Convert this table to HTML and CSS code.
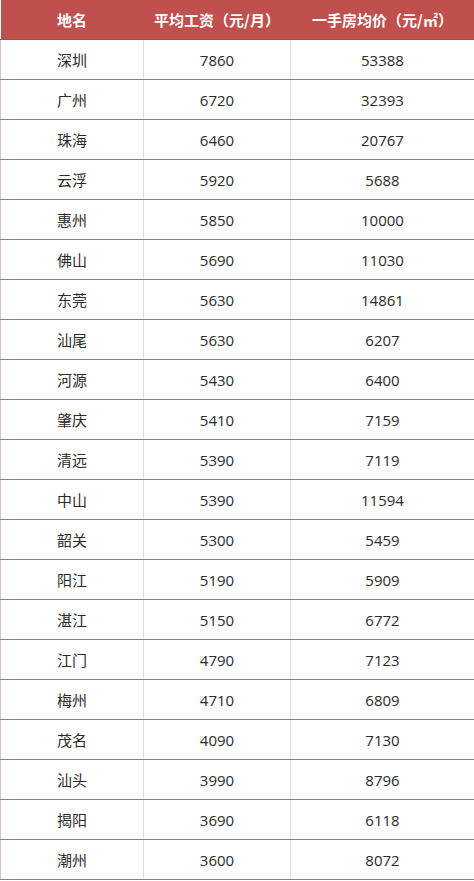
FILE: index.html
```html
<!DOCTYPE html>
<html lang="zh-CN">
<head>
<meta charset="utf-8">
<title>广东各市平均工资与房价</title>
<link rel="stylesheet" href="styles.css">
</head>
<body>
<table class="data">
<colgroup><col class="c1"><col class="c2"><col class="c3"></colgroup>
<thead>
<tr><th>地名</th><th>平均工资（元/月）</th><th>一手房均价（元/㎡）</th></tr>
</thead>
<tbody>
<tr><td>深圳</td><td>7860</td><td>53388</td></tr>
<tr><td>广州</td><td>6720</td><td>32393</td></tr>
<tr><td>珠海</td><td>6460</td><td>20767</td></tr>
<tr><td>云浮</td><td>5920</td><td>5688</td></tr>
<tr><td>惠州</td><td>5850</td><td>10000</td></tr>
<tr><td>佛山</td><td>5690</td><td>11030</td></tr>
<tr><td>东莞</td><td>5630</td><td>14861</td></tr>
<tr><td>汕尾</td><td>5630</td><td>6207</td></tr>
<tr><td>河源</td><td>5430</td><td>6400</td></tr>
<tr><td>肇庆</td><td>5410</td><td>7159</td></tr>
<tr><td>清远</td><td>5390</td><td>7119</td></tr>
<tr><td>中山</td><td>5390</td><td>11594</td></tr>
<tr><td>韶关</td><td>5300</td><td>5459</td></tr>
<tr><td>阳江</td><td>5190</td><td>5909</td></tr>
<tr><td>湛江</td><td>5150</td><td>6772</td></tr>
<tr><td>江门</td><td>4790</td><td>7123</td></tr>
<tr><td>梅州</td><td>4710</td><td>6809</td></tr>
<tr><td>茂名</td><td>4090</td><td>7130</td></tr>
<tr><td>汕头</td><td>3990</td><td>8796</td></tr>
<tr><td>揭阳</td><td>3690</td><td>6118</td></tr>
<tr><td>潮州</td><td>3600</td><td>8072</td></tr>
</tbody>
</table>
</body>
</html>
```
FILE: styles.css
```css
html, body {
  margin: 0;
  padding: 0;
  background: #ffffff;
}
body {
  font-family: "Open Sans", "Noto Sans CJK SC", sans-serif;
  color: #2a2a2a;
}
.data {
  width: 474px;
  border-collapse: collapse;
  table-layout: fixed;
}
.c1 { width: 143px; }
.c2 { width: 147px; }
.c3 { width: 184px; }
.data th,
.data td {
  height: 39px;
  padding: 0;
  text-align: center;
  vertical-align: middle;
  font-size: 15px;
  line-height: 20px;
}
.data th {
  background: #c0504d;
  color: #ffffff;
  font-weight: bold;
  font-family: "Noto Sans CJK SC", sans-serif;
  border-bottom: 1px solid #b04a47;
}
.data td {
  border-bottom: 1px solid #a77373;
  border-left: 1px solid #dddddd;
}
.data td:first-child {
  border-left: 1px solid #d9c4c4;
}
.data td:last-child {
  border-right: 1px solid #a77373;
}
```
